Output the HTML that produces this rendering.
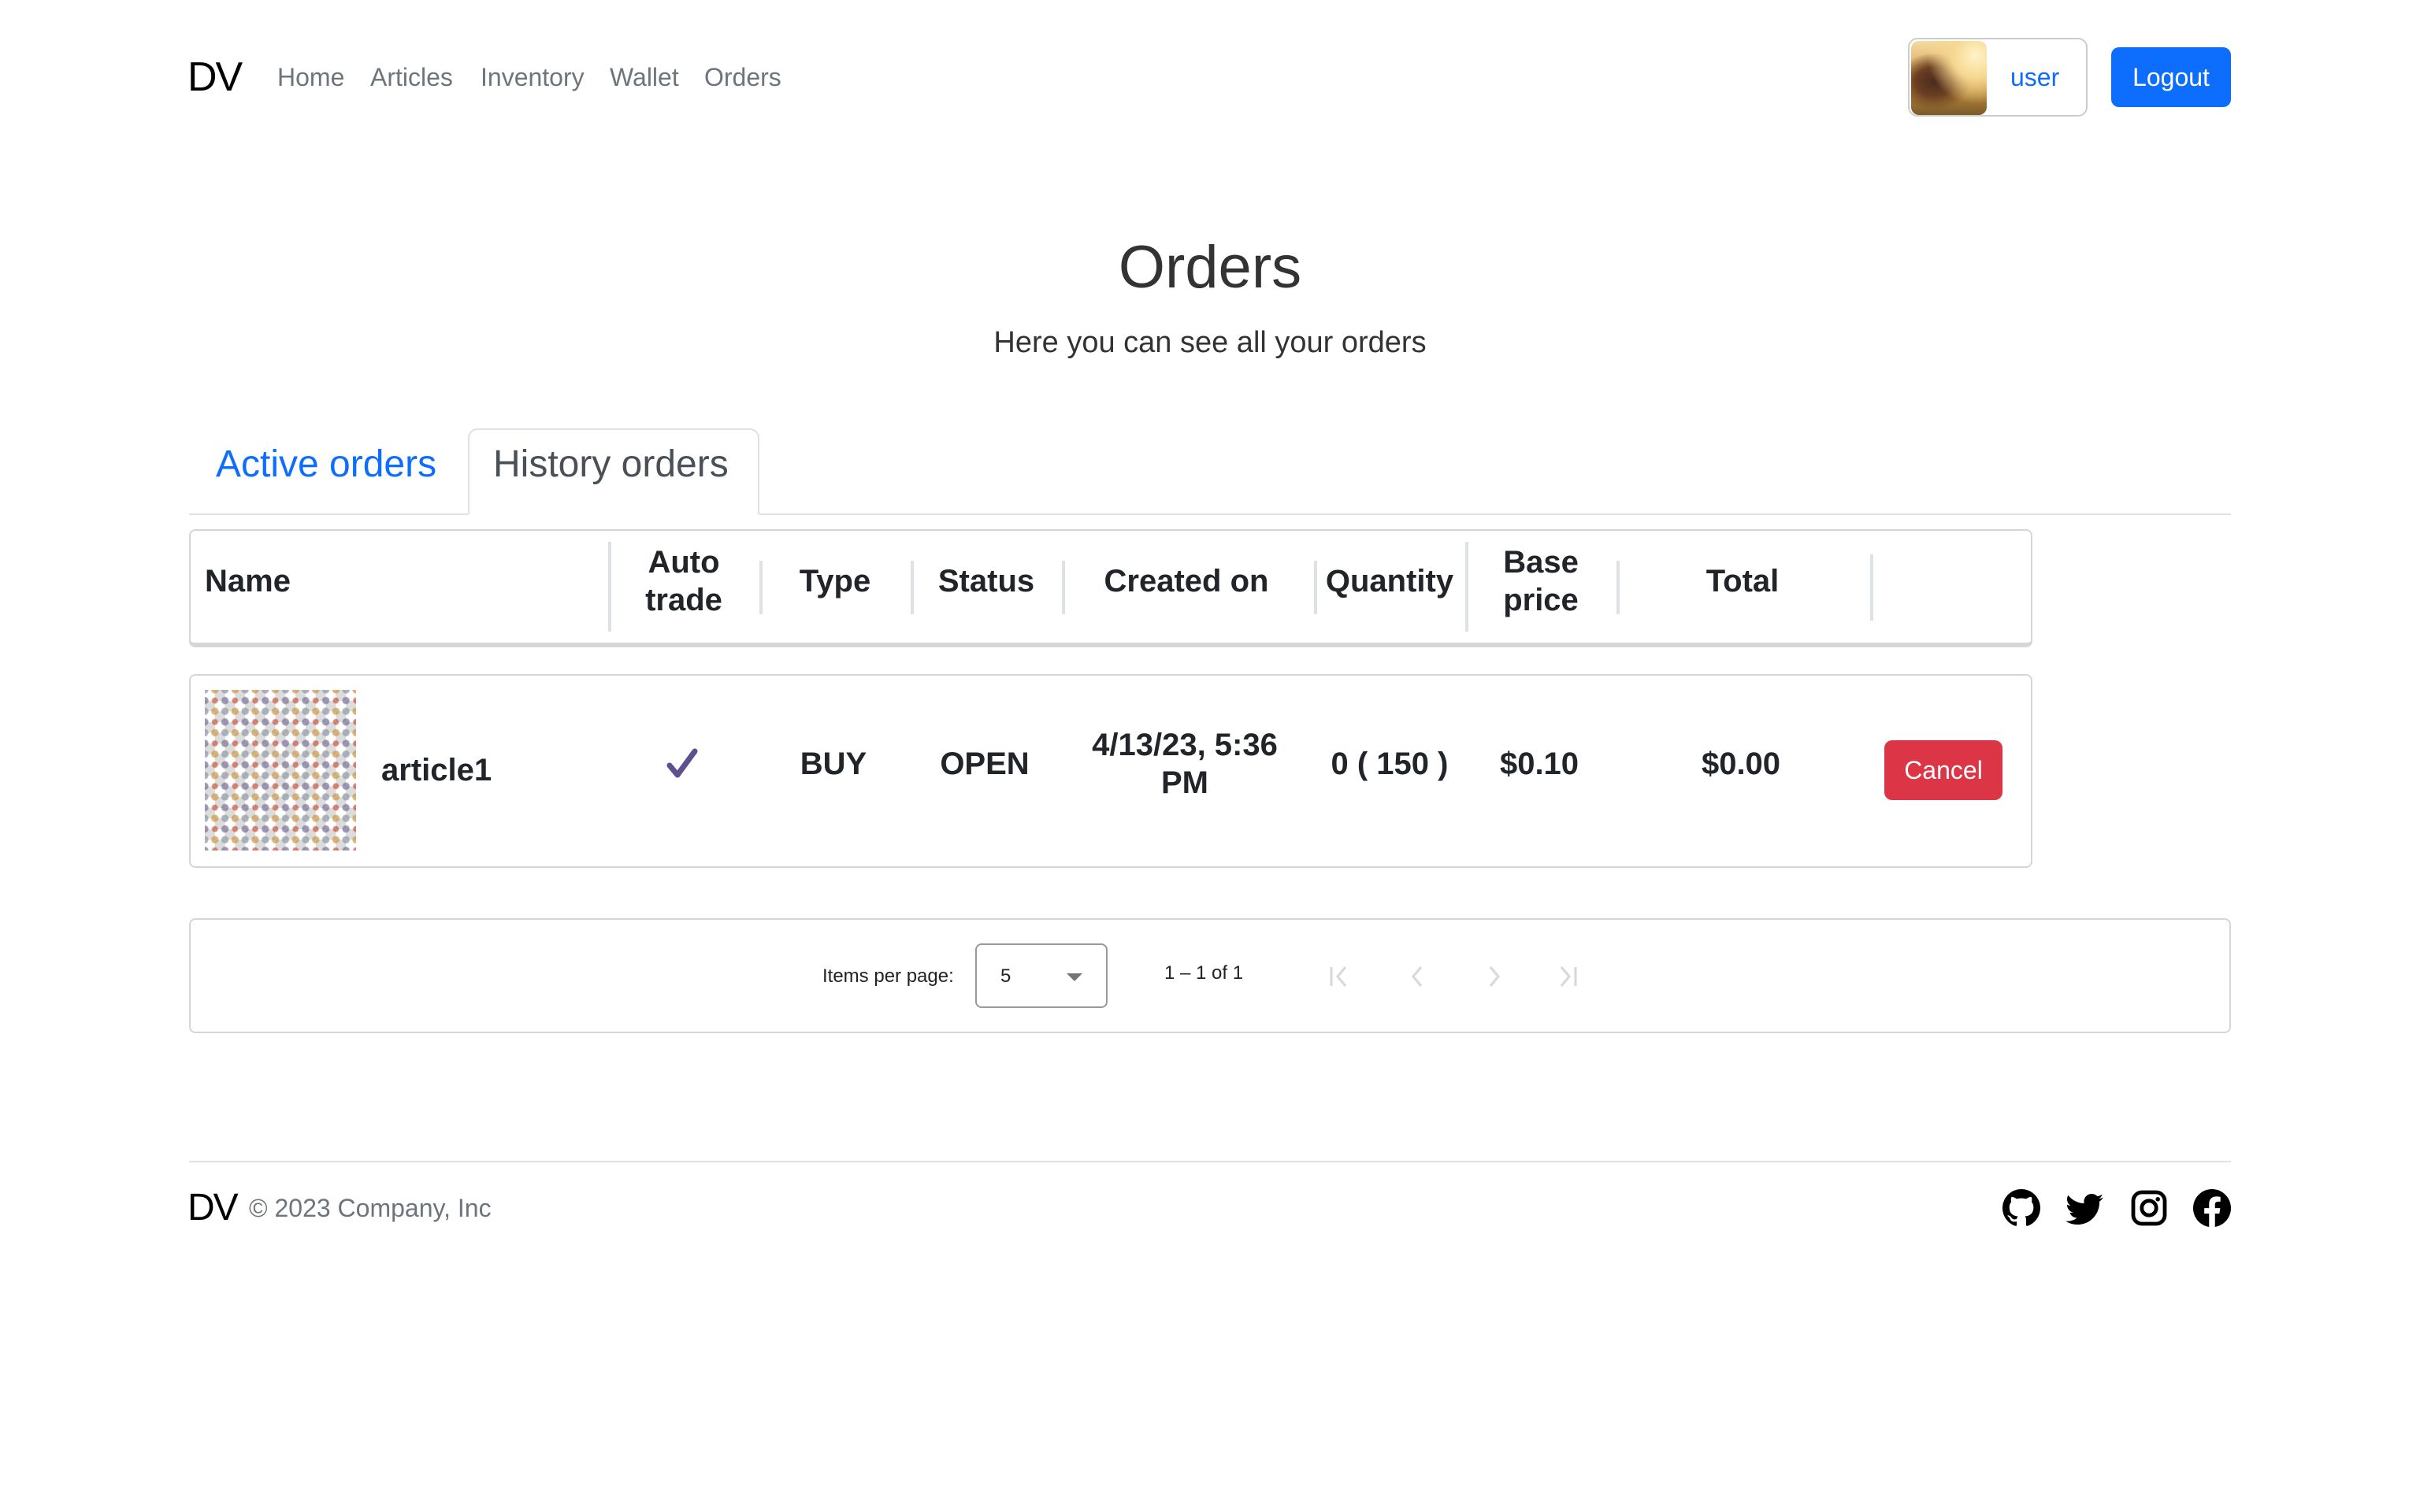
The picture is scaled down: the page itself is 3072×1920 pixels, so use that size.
<!DOCTYPE html>
<html><head><meta charset="utf-8"><style>
*{box-sizing:border-box;margin:0;padding:0}
html,body{width:1536px;height:960px;background:#fff;overflow:hidden}
body{zoom:2;font-family:"Liberation Sans",Arial,sans-serif;color:#212529;position:relative;width:1536px;height:960px}
.a{position:absolute;white-space:nowrap}
.c{transform:translateX(-50%);text-align:center}
.nav{color:#6c757d;font-size:16px;top:40px}
.th{font-size:20px;font-weight:bold;color:#212529;line-height:24px}
.td{font-size:20px;font-weight:bold;color:#212529;line-height:24px}
.div{position:absolute;width:2px;background:#dee2e6}
</style></head><body>
<div class="a" style="left:119px;top:34px;font-size:26px;color:#000;letter-spacing:-1px">DV</div>
<div class="a nav" style="left:176px">Home</div>
<div class="a nav" style="left:235px">Articles</div>
<div class="a nav" style="left:305px">Inventory</div>
<div class="a nav" style="left:387px">Wallet</div>
<div class="a nav" style="left:447px">Orders</div>

<div class="a" style="left:1211px;top:24px;width:114px;height:50px;border:1px solid #ccc;border-radius:6px;background:#fff"></div>
<div class="a" style="left:1213px;top:26px;width:48px;height:47px;border-radius:5px;background:radial-gradient(circle at 85% 20%,#fff3c8 0%,#f6d891 25%,transparent 55%),radial-gradient(ellipse at 30% 55%,#4a2c1c 0%,#6b3f22 25%,transparent 50%),linear-gradient(#f4dca0 0%,#d9a45a 45%,#b68538 70%,#7b5a2a 100%)"></div>
<div class="a" style="left:1276px;top:40px;font-size:16px;color:#0d6efd">user</div>
<div class="a" style="left:1340px;top:30px;width:76px;height:38px;border-radius:5px;background:#0d6efd;color:#fff;font-size:16px;line-height:38px;text-align:center">Logout</div>

<div class="a c" style="left:768px;top:148px;font-size:38px;font-weight:300;color:#333">Orders</div>
<div class="a c" style="left:768px;top:207px;font-size:19px;font-weight:300;color:#333">Here you can see all your orders</div>

<div class="a" style="left:120px;top:326px;width:1296px;height:1px;background:#dee2e6"></div>
<div class="a" style="left:297px;top:272px;width:185px;height:55px;border:1px solid #dee2e6;border-bottom:1px solid #fff;border-radius:6px 6px 0 0;background:#fff"></div>
<div class="a" style="left:137px;top:281px;font-size:24px;color:#0d6efd">Active orders</div>
<div class="a" style="left:313px;top:281px;font-size:24px;color:#495057">History orders</div>

<div class="a" style="left:120px;top:336px;width:1170px;height:75px;border:1px solid #d6d6d6;border-bottom:3px solid #d6d6d6;border-radius:4px"></div>
<div class="div" style="left:386px;top:344px;height:57px"></div>
<div class="div" style="left:482px;top:356px;height:34px"></div>
<div class="div" style="left:578px;top:356px;height:34px"></div>
<div class="div" style="left:674px;top:356px;height:34px"></div>
<div class="div" style="left:834px;top:356px;height:34px"></div>
<div class="div" style="left:930px;top:344px;height:57px"></div>
<div class="div" style="left:1026px;top:356px;height:34px"></div>
<div class="div" style="left:1187px;top:352px;height:42px"></div>
<div class="a th" style="left:130px;top:357px">Name</div>
<div class="a th c" style="left:434px;top:345px">Auto<br>trade</div>
<div class="a th c" style="left:530px;top:357px">Type</div>
<div class="a th c" style="left:626px;top:357px">Status</div>
<div class="a th c" style="left:753px;top:357px">Created on</div>
<div class="a th c" style="left:882px;top:357px">Quantity</div>
<div class="a th c" style="left:978px;top:345px">Base<br>price</div>
<div class="a th c" style="left:1106px;top:357px">Total</div>

<div class="a" style="left:120px;top:428px;width:1170px;height:123px;border:1px solid #d6d6d6;border-radius:4px"></div>
<div class="a" style="left:130px;top:438px;width:96px;height:102px;background:radial-gradient(circle,rgba(200,80,60,.7) 0 1.6px,transparent 2.2px) 0 0/12.8px 13.6px,radial-gradient(circle,rgba(120,110,150,.7) 0 2px,transparent 2.6px) 6.4px 0/12.8px 13.6px,radial-gradient(circle,rgba(200,150,70,.7) 0 2px,transparent 2.6px) 0 6.8px/12.8px 13.6px,radial-gradient(circle,rgba(150,160,170,.8) 0 2px,transparent 2.6px) 6.4px 6.8px/12.8px 13.6px,repeating-conic-gradient(#dcdcdc 0 25%,#fff 0 50%) 0 0/12.8px 13.6px"></div>
<div class="a td" style="left:242px;top:477px">article1</div>
<svg class="a" style="left:422px;top:474px" width="22" height="22" viewBox="0 0 22 22"><path d="M3 12 L8 18 L19 3" fill="none" stroke="#5e4f8f" stroke-width="3.5" stroke-linecap="round" stroke-linejoin="round"/></svg>
<div class="a td c" style="left:529px;top:473px">BUY</div>
<div class="a td c" style="left:625px;top:473px">OPEN</div>
<div class="a td c" style="left:752px;top:461px">4/13/23, 5:36<br>PM</div>
<div class="a td c" style="left:882px;top:473px">0 ( 150 )</div>
<div class="a td c" style="left:977px;top:473px">$0.10</div>
<div class="a td c" style="left:1105px;top:473px">$0.00</div>
<div class="a" style="left:1196px;top:470px;width:75px;height:38px;border-radius:5px;background:#dc3545;color:#fff;font-size:16px;line-height:38px;text-align:center">Cancel</div>

<div class="a" style="left:120px;top:583px;width:1296px;height:73px;border:1px solid #d6d6d6;border-radius:4px"></div>
<div class="a" style="left:522px;top:613px;font-size:12px;color:#222">Items per page:</div>
<div class="a" style="left:619px;top:599px;width:84px;height:41px;border:1px solid #999;border-radius:4px"></div>
<div class="a" style="left:635px;top:613px;font-size:12px;color:#222">5</div>
<div class="a" style="left:677px;top:618px;width:0;height:0;border-left:5px solid transparent;border-right:5px solid transparent;border-top:5px solid #757575"></div>
<div class="a" style="left:739px;top:611px;font-size:12px;color:#222">1 – 1 of 1</div>
<svg class="a" style="left:838px;top:609px" width="180" height="22" viewBox="0 0 180 22" fill="none" stroke="#d9d9d9" stroke-width="1.6"><path d="M7 5V17M16 5L11 11L16 17"/><path d="M64 5L59 11L64 17"/><path d="M108 5L113 11L108 17"/><path d="M153 5L158 11L153 17M162 5V17"/></svg>

<div class="a" style="left:120px;top:737px;width:1296px;height:1px;background:#dee2e6"></div>
<div class="a" style="left:119px;top:753px;font-size:24px;color:#000;letter-spacing:-1px">DV</div>
<div class="a" style="left:158px;top:758px;font-size:16px;color:#6c757d">© 2023 Company, Inc</div>

<svg class="a" style="left:1271px;top:755px" width="24" height="24" viewBox="0 0 16 16"><path fill="#000" d="M8 0C3.58 0 0 3.58 0 8c0 3.54 2.290 6.530 5.470 7.590.4.07.55-.17.55-.38 0-.19-.01-.82-.01-1.490-2.010.37-2.530-.49-2.690-.94-.09-.23-.48-.94-.82-1.130-.28-.15-.68-.52-.01-.53.63-.01 1.080.58 1.230.82.72 1.210 1.870.87 2.330.66.07-.52.28-.87.51-1.070-1.780-.2-3.640-.89-3.640-3.950 0-.87.31-1.590.82-2.150-.08-.2-.36-1.020.08-2.120 0 0 .67-.21 2.200.82.64-.18 1.320-.27 2-.27.68 0 1.360.09 2 .27 1.530-1.040 2.200-.82 2.200-.82.44 1.100.16 1.920.08 2.120.51.56.82 1.270.82 2.150 0 3.070-1.870 3.750-3.650 3.950.29.25.54.73.54 1.480 0 1.070-.01 1.930-.01 2.200 0 .21.15.46.55.38A8.013 8.013 0 0016 8c0-4.420-3.580-8-8-8z"/></svg>
<svg class="a" style="left:1311px;top:755px" width="24" height="24" viewBox="0 0 16 16"><path fill="#000" d="M5.026 15c6.038 0 9.341-5.003 9.341-9.334 0-.14 0-.282-.006-.422A6.685 6.685 0 0016 3.542a6.658 6.658 0 01-1.889.518 3.301 3.301 0 001.447-1.817 6.533 6.533 0 01-2.087.793A3.286 3.286 0 007.875 6.030a9.325 9.325 0 01-6.767-3.429 3.289 3.289 0 001.018 4.382A3.323 3.323 0 01.64 6.575v.045a3.288 3.288 0 002.632 3.218 3.203 3.203 0 01-.865.115 3.230 3.230 0 01-.614-.057 3.283 3.283 0 003.067 2.277A6.588 6.588 0 01.78 13.580a6.320 6.320 0 01-.78-.045A9.344 9.344 0 005.026 15z"/></svg>
<svg class="a" style="left:1352px;top:755px" width="24" height="24" viewBox="0 0 24 24"><rect x="2" y="2" width="20" height="20" rx="5.5" fill="none" stroke="#000" stroke-width="2.4"/><circle cx="12" cy="12" r="4.6" fill="none" stroke="#000" stroke-width="2.4"/><circle cx="17.6" cy="6.4" r="1.4" fill="#000"/></svg>
<svg class="a" style="left:1392px;top:755px" width="24" height="24" viewBox="0 0 16 16"><path fill="#000" d="M16 8.049c0-4.446-3.582-8.050-8-8.050C3.580 0-.002 3.603-.002 8.050c0 4.017 2.926 7.347 6.750 7.951v-5.625h-2.030V8.050H6.750V6.275c0-2.017 1.195-3.131 3.022-3.131.876 0 1.791.157 1.791.157v1.980h-1.009c-.993 0-1.303.621-1.303 1.258v1.510h2.218l-.354 2.326H9.250V16c3.824-.604 6.750-3.934 6.750-7.951z"/></svg>
</body></html>
